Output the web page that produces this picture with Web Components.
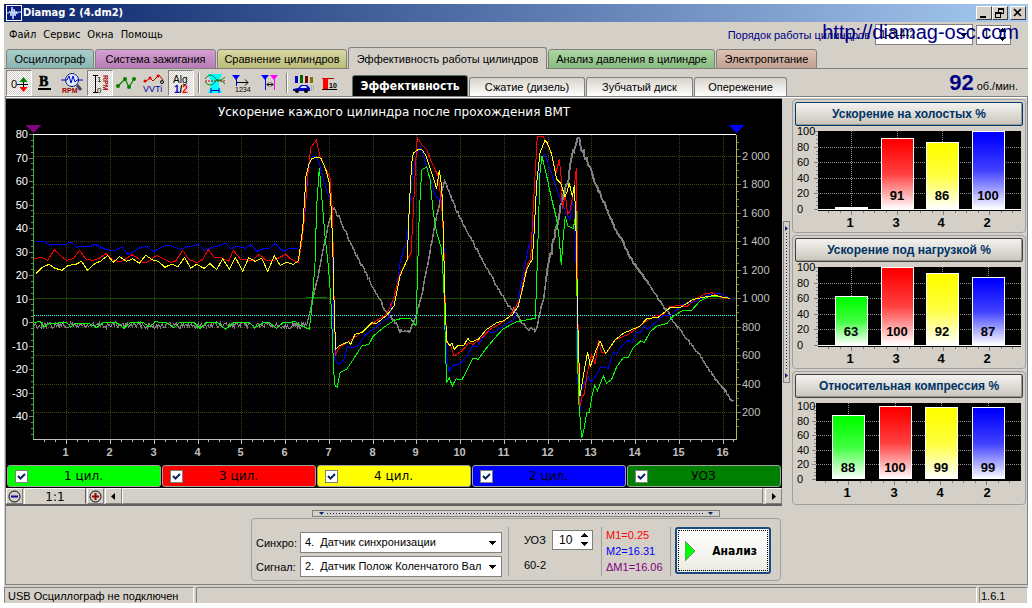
<!DOCTYPE html>
<html lang="ru">
<head>
<meta charset="utf-8">
<title>Diamag 2 (4.dm2)</title>
<style>
html, body { margin: 0; background: #fff; }
body { padding: 4px 4px 5px; font: 11px/16px "Liberation Sans", Arial, sans-serif; color: #000; }
</style>
</head>
<body>
<diamag-app></diamag-app>
<script>
const define = (name, html, init) => {
  const tpl = document.createElement('template');
  tpl.innerHTML = '<style>*{box-sizing:border-box}button,input,select{font:inherit;color:inherit;margin:0}</style>' + html;
  customElements.define(name, class extends HTMLElement {
    constructor() {
      super();
      this.attachShadow({ mode: 'open' }).append(tpl.content.cloneNode(true));
    }
    connectedCallback() {
      if (init && !this.ready) { this.ready = true; init(this, this.shadowRoot); }
    }
  });
};

/* ---------- title bar ---------- */
define('title-bar', `
<style>
:host { display: flex; align-items: center; height: 18px; padding: 0 2px; background: linear-gradient(90deg, #0a246a, #a6caf0); color: #fff; font: bold 11px/16px "DejaVu Sans Condensed", "DejaVu Sans", sans-serif; }
h1 { font: inherit; margin: 0 auto 0 1px; }
.box { width: 16px; height: 14px; padding: 0; border: 1px solid; border-color: #fff #404040 #404040 #fff; background: #d4d0c8; display: flex; }
.close { margin-left: 2px; }
svg { display: block; }
</style>
<svg width="16" height="16" viewBox="0 0 16 16"><rect width="16" height="16" fill="#fff"/><rect x="1" y="1" width="14" height="14" fill="#0a1a80"/><path d="M1 8h2l1-2 1 5 1-9 1 12 1-10 1 7 1-5 1 3 1-2h3" fill="none" stroke="#cfe0ff"/></svg>
<h1><slot></slot></h1>
<button class="box" aria-label="Свернуть"><svg width="14" height="12" shape-rendering="crispEdges"><path d="M3 9h6v2H3z"/></svg></button>
<button class="box" aria-label="Развернуть"><svg width="14" height="12" shape-rendering="crispEdges"><path d="M5.500 2v3M5 1.500h6M5 2.500h6M10.500 2v5M9 6.500h2M2 5h6v1H2zM2.500 5v6M7.500 5v6M2 10.500h6" fill="none" stroke="#000"/></svg></button>
<button class="box close" aria-label="Закрыть"><svg width="14" height="12"><path d="M3 2l7 7M10 2l-7 7" stroke="#000" stroke-width="1.600"/></svg></button>`);

/* ---------- drop-down and number box ---------- */
define('drop-down', `
<style>
:host { display: block; position: relative; }
select { display: block; width: 100%; height: 21px; padding: 0 18px 2px 4px; border: 1px solid #808080; border-radius: 0; background: #fff; appearance: none; }
svg { position: absolute; right: 6px; top: 9px; pointer-events: none; }
</style>
<select><option></option></select>
<svg width="7" height="4" shape-rendering="crispEdges"><path d="M0 0h7L3.500 4z"/></svg>`, (el, root) => {
  root.querySelector('option').textContent = el.getAttribute('value');
  root.querySelector('select').setAttribute('aria-label', el.getAttribute('label'));
});

define('number-box', `
<style>
:host { display: block; position: relative; }
input { display: block; width: 100%; height: 20px; padding: 0 0 1px 6px; border: 1px solid #808080; border-radius: 0; background: #fff; font-size: 12px; }
svg { position: absolute; right: 5px; top: 3px; pointer-events: none; }
</style>
<input type="text" inputmode="numeric">
<svg width="7" height="14" shape-rendering="crispEdges"><path d="M0 4h7L3.500 0zM0 9h7l-3.500 4z"/></svg>`, (el, root) => {
  const i = root.querySelector('input');
  i.value = el.getAttribute('value');
  i.setAttribute('aria-label', el.getAttribute('label'));
});

/* ---------- menu ---------- */
define('menu-bar', `
<style>
:host { display: flex; align-items: center; height: 25px; position: relative; }
nav { display: flex; gap: 7px; margin: 0 auto 0 5px; font: 11px/16px "DejaVu Sans Condensed", sans-serif; }
nav button { border: 0; padding: 0; background: none; }
.order { color: #000080; margin-right: 5px; }
drop-down { width: 98px; margin-right: 3px; }
number-box { width: 35px; margin-right: 17px; }
a { position: absolute; right: 9px; top: -2px; font-size: 20px; line-height: 24px; color: #000080; text-decoration: none; }
</style>
<nav><button>Файл</button><button>Сервис</button><button>Окна</button><button>Помощь</button></nav>
<span class="order">Порядок работы цилиндров</span>
<drop-down value="1-3-4-2" label="Порядок работы цилиндров"></drop-down>
<number-box value="1" label="Номер"></number-box>
<a href="http://diamag-osc.com">http://diamag-osc.com</a>`);

/* ---------- tabs ---------- */
define('main-tab', `
<style>
:host { display: block; flex: none; }
button { display: block; width: 100%; height: 20px; padding: 0; white-space: nowrap; border: 1px solid #808080; border-radius: 3px 3px 0 0; background: linear-gradient(var(--from), var(--to)); }
:host([active]) button { height: 22px; border-bottom: 0; background: #d4d0c8; }
</style>
<button role="tab"><slot></slot></button>`);

define('sub-tab', `
<style>
:host { display: block; flex: none; }
button { display: block; width: 100%; height: 19px; padding: 0; white-space: nowrap; border: 1px solid #808080; border-bottom: 0; border-radius: 3px 3px 0 0; background: linear-gradient(#d8d4cc, #fff); }
:host([active]) button { height: 21px; background: #000; color: #fff; border-color: #5c6f66; font: bold 12px/16px "DejaVu Sans Condensed", sans-serif; }
</style>
<button role="tab"><slot></slot></button>`);

/* ---------- toolbar ---------- */
const icons = {
  zero: `<text x="5" y="18" font-size="11">0</text><path d="M11 14.500h11M17.500 10v9" stroke="#000"/><path d="M13.500 12h8l-4-5z" fill="#008000"/><path d="M13.500 17h8l-4 5z" fill="#f00"/>`,
  bold: `<text x="6" y="16" font-size="14" font-weight="bold" font-family="Liberation Serif" stroke="#000" stroke-width=".6">B</text><path d="M5 19h13" stroke="#000" stroke-width="2"/>`,
  lens: `<circle cx="12" cy="10" r="6.500" fill="#dcecff" stroke="#0a246a"/><path d="M1 10h6l2-4 2 7 2-7 2 6 2-2h6" fill="none" stroke="#00c"/><path d="M17 15l4 5" stroke="#446" stroke-width="3"/><text x="2" y="23" font-size="7" font-weight="bold" fill="#a00000">RPM</text>`,
  scale: `<path d="M6 5.500h5M6 22.500h5M8.500 5v17" stroke="#000"/><text x="10" y="12" font-size="8">1</text><text x="10" y="23" font-size="8">0</text><text transform="translate(16 5) rotate(90)" font-size="7" font-weight="bold" fill="#a00000">RPM</text>`,
  dots: `<path d="M4 16l7-7 4 8 5-8" fill="none" stroke="#008000" stroke-width="1.200"/><g fill="#008000"><circle cx="4" cy="16" r="2"/><circle cx="11" cy="9" r="2"/><circle cx="15" cy="17" r="2"/><circle cx="20" cy="9" r="2"/></g>`,
  vvti: `<path d="M4 12l5-4 3 3 6-6 4 5" fill="none" stroke="#c00000"/><g fill="#e00"><circle cx="4" cy="11" r="1.500"/><circle cx="9" cy="8" r="1.500"/><circle cx="17" cy="6" r="1.500"/></g><circle cx="21" cy="12" r="1.500" fill="none" stroke="#000"/><text x="2" y="22" font-size="9" fill="#0000a0">VVTi</text>`,
  alg: `<text x="5" y="13" font-size="10">Alg</text><text x="6" y="23" font-size="10" font-weight="bold" fill="#0000d0">1<tspan fill="#000">/</tspan><tspan fill="#f00">2</tspan></text>`,
  phase: `<path d="M6 4h14l-3 7v5l3 7H6l3-7v-5z" fill="#0ff"/><path d="M3 9c4-5 7-5 10-1s6 3 10-1" fill="none" stroke="#008000"/><path d="M3 11h20" stroke="#c00" stroke-dasharray="2 1"/><path d="M3 12c4 4 7 4 10 0s6-2 10 2" fill="none" stroke="#008000"/><path d="M9 20.500h8M9 18v5M17 18v5" stroke="#00c"/>`,
  order: `<path d="M3 5h8L7 10z" fill="#00f"/><path d="M7.500 9v7" stroke="#00c"/><path d="M8 12.500h11M16 9.500l3 3-3 3" fill="none" stroke="#000"/><text x="6" y="22" font-size="7">1234</text>`,
  marks: `<path d="M5 5h8l-4 5z" fill="#00f"/><path d="M14 5h8l-4 5z" fill="#f0f"/><path d="M9.500 9v11" stroke="#00f"/><path d="M18.500 9v11" stroke="#f0f"/><path d="M11 14.500h6M13 12.500l-2 2 2 2M15 12.500l2 2-2 2" fill="none" stroke="#000"/>`,
  car: `<path d="M5 6h3v7H5z" fill="#00c"/><path d="M10 5h3v8h-3z" fill="#060"/><path d="M15 6h3v7h-3z" fill="#800000"/><path d="M20 7h3v6h-3z" fill="#770"/><path d="M3 19l5-1 3-3h6l3 3v3H3z" fill="#0000d0"/><path d="M10 18l2-2h4l1 2z" fill="#cfe0ff"/><circle cx="7" cy="21" r="2"/><circle cx="16" cy="21" r="2"/><path d="M21 16h3M21 18h3M21 20h3" stroke="#888" stroke-dasharray="1 1"/>`,
  limit: `<path d="M6 8h5v11H6z" fill="#f00"/><path d="M5 8.500h12" stroke="#c00"/><path d="M5 19.500h15" stroke="#000"/><text x="12" y="18" font-size="7" font-weight="bold">10</text>`
};
define('tool-button', `
<style>
:host { display: block; flex: none; }
button { display: block; width: 26px; height: 26px; padding: 0; border: 0; background: none; }
:host([pressed]) button { border: 1px solid; border-color: #808080 #fff #fff #808080; background: repeating-conic-gradient(#fff 0 25%, #d4d0c8 0 50%) 0 0 / 2px 2px; }
svg { display: block; width: 26px; height: 26px; }
:host([pressed]) svg { margin: -1px; }
</style>
<button></button>`, (el, root) => {
  const b = root.querySelector('button');
  b.setAttribute('aria-label', el.getAttribute('label'));
  b.innerHTML = `<svg viewBox="0 0 26 26">${icons[el.getAttribute('icon')]}</svg>`;
});

define('tool-bar', `
<style>
:host { display: flex; height: 28px; border-top: 1px solid #808080; margin-top: -1px; padding-left: 2px; align-items: flex-end; }
.tools { display: flex; gap: 1px; }
i { width: 2px; margin: 3px 1px 3px 3px; border-left: 1px solid #808080; border-right: 1px solid #fff; }
.tabs { display: flex; gap: 1px; align-items: flex-end; margin-left: 9px; }
.rpm { margin: 0 10px 0 auto; display: flex; align-items: baseline; gap: 3px; }
.rpm b { font-size: 22px; line-height: 26px; color: #000080; }
</style>
<div class="tools">
<tool-button icon="zero" label="Ноль" pressed></tool-button><tool-button icon="bold" label="Жирные линии"></tool-button><tool-button icon="lens" label="Масштаб RPM"></tool-button><tool-button icon="scale" label="Шкала RPM" pressed></tool-button><tool-button icon="dots" label="Точки"></tool-button><tool-button icon="vvti" label="VVTi"></tool-button><tool-button icon="alg" label="Алгоритм" pressed></tool-button><i></i>
<tool-button icon="phase" label="Фаза"></tool-button><tool-button icon="order" label="Порядок"></tool-button><tool-button icon="marks" label="Маркеры"></tool-button><i></i>
<tool-button icon="car" label="Разгон"></tool-button><tool-button icon="limit" label="Предел"></tool-button>
</div>
<div class="tabs" role="tablist">
<sub-tab active style="width:116px">Эффективность</sub-tab><sub-tab style="width:116px">Сжатие (дизель)</sub-tab><sub-tab style="width:107px">Зубчатый диск</sub-tab><sub-tab style="width:93px">Опережение</sub-tab>
</div>
<div class="rpm"><b>92</b><span>об./мин.</span></div>`);

/* ---------- main chart: traces are stored at three units per pixel ---------- */
const traces = {
  blue: [[0, '108,436 132,436 150,448 164,445 195,445 211,438 230,454 245,451 270,452 285,445 318,461 345,464 365,454 383,475 396,470 420,455 440,451 460,467 490,451 510,448 540,460 560,453 580,450 595,444 612,463 640,453 660,449 675,441 692,458 712,451 735,457 753,446 770,466 790,458 808,458 826,442 848,466 868,457'],
    [870, '0,457 24,457 33,448 40,380 47,310 52,240 60,200 70,180 82,185 90,210 100,250 110,285 120,310 125,340 128,450 131,700 135,790 142,802 152,802 162,790 172,752 190,756 205,748 225,718 245,702 262,690 280,675 297,665 307,620 320,570 330,500 340,465 350,440 356,380 362,290 370,215 380,175 392,152 398,170 410,215 425,260 435,300 450,310 458,350 463,480 467,700 470,780 476,825 490,808 510,803 530,780 548,750 560,753 575,730 595,706 610,711 640,690 670,672 676,655 690,580 705,510 715,455 725,425 735,350 742,260 750,210 760,180 765,175'],
    [1500, '142,195 155,235 170,280 185,320 200,355 210,372 217,320 222,330 228,500 230,760 233,850 240,945 246,880 255,855 266,843 273,858 290,835 302,812 325,817 340,768 350,775 362,752 385,733 397,740 408,708 420,712 433,690 440,700 460,685 490,658 510,660 525,645 550,625 590,615 610,603 640,593 660,592 680,603 695,610']],
  red: [[0, '103,488 125,484 143,493 163,461 185,482 200,493 220,488 239,463 258,490 280,493 297,487 318,473 338,492 362,497 380,487 396,476 412,485 428,500 445,497 470,478 490,488 512,499 527,495 548,463 566,490 590,500 608,490 625,461 643,485 665,485 686,496 700,463 722,491 757,493 778,475 797,492 820,494 857,475'],
    [870, '0,487 25,500 35,440 45,350 55,220 62,155 79,133 90,180 108,220 120,245 127,340 130,480 133,650 137,775 150,752 170,740 200,720 230,695 250,680 290,655 310,610 330,535 350,495 363,470 370,350 376,220 382,125 400,152 410,160 425,200 445,240 455,330 461,430 465,600 470,740 480,745 492,780 515,765 525,755 535,740 550,745 575,725 600,700 630,683 660,660 690,610 705,530 715,500 722,490 730,330 738,190 742,121 760,121'],
    [1500, '140,142 152,165 168,230 178,190 183,240 187,340 196,295 203,355 210,345 218,300 223,270 229,217 232,400 235,800 240,930 247,900 253,895 262,830 275,775 285,805 296,732 305,770 320,770 345,732 385,715 410,697 440,675 465,660 490,655 510,632 540,628 560,632 590,606 615,594 636,590 655,602 680,608']],
  lime: [[0, '103,680 120,676 133,692 150,682 200,680 212,693 225,681 265,681 290,695 310,680 350,680 372,697 390,681 430,680 450,693 465,677 500,681 522,695 540,678 580,678 600,697 620,680 655,681 677,700 700,680 750,681 765,695 790,680 810,681 830,697 850,679'],
    [870, '0,680 15,676 30,687 58,700 65,640 75,500 80,330 88,215 95,300 105,420 115,510 122,600 128,750 133,855 136,870 142,873 150,830 170,820 190,790 215,750 237,745 250,720 280,695 310,675 335,667 362,668 378,690 382,550 388,350 395,222 410,212 420,250 430,350 440,410 455,460 462,590 467,780 470,858 478,845 487,870 498,848 515,852 530,825 548,787 565,790 590,755 620,720 640,698 680,677 736,667 742,500 750,230 756,180 765,220'],
    [1500, '140,240 155,310 170,370 178,430 184,508 190,420 196,360 203,390 220,398 229,345 231,600 235,900 245,1027 252,1000 260,950 268,950 275,905 284,868 292,885 310,840 320,862 335,850 350,812 370,785 385,785 400,755 422,735 433,740 450,708 470,690 500,683 520,660 550,643 575,643 600,615 625,603 660,600']],
  yellow: [[0, '108,533 125,515 147,505 165,517 186,523 205,508 228,505 245,496 262,523 284,503 302,495 323,479 340,499 358,482 380,496 398,488 418,502 437,478 458,492 475,496 495,514 515,504 533,513 554,484 572,517 590,505 612,517 630,503 650,521 668,488 688,520 706,484 728,526 746,485 765,496 785,487 803,526 823,479 840,508 862,498'],
    [870, '0,502 10,505 25,495 38,400 48,240 57,205 65,188 80,183 93,187 107,220 118,262 123,330 128,440 133,650 137,760 150,748 176,737 182,745 195,715 215,710 245,680 258,683 290,658 312,630 330,540 352,490 358,330 365,200 370,172 385,160 395,160 407,178 425,230 440,278 448,223 455,270 460,400 465,620 470,735 480,750 486,740 493,760 505,748 523,747 533,727 543,738 565,730 590,700 620,680 640,675 668,655 685,630 695,590 710,520 727,490 733,400 740,260 750,170 765,133'],
    [1500, '142,140 155,175 170,250 182,262 195,302 202,285 208,262 217,302 223,268 227,360 230,500 234,700 240,900 247,860 255,810 263,768 271,812 285,770 300,735 317,773 345,732 370,712 405,697 420,690 440,668 475,664 510,635 540,635 580,610 620,602 645,598 665,603 690,607']]
};
const speed = [[0, '103,688 868,688'],
  [870, '0,688 50,690 58,655 70,600 85,540 100,460 118,370 130,335 150,370 190,460 240,555 290,650 310,670 330,705 360,708 375,665 395,600 410,520 425,440 440,360 455,290 464,258 500,345 560,460 640,605 670,650'],
  [1500, '40,640 60,670 85,700 108,703 120,650 132,600 142,520 155,460 170,390 185,320 200,270 215,190 225,150 235,125 245,165 260,195 290,270 340,385 400,500 470,600 530,690 600,780 640,840 680,890 703,925']];
const toPoints = segs => segs.flatMap(([dx, s]) => s.split(' ').map(p => p.split(',').map(Number)).map(([x, y]) => [x + dx, y]));
const jitter = pts => {
  const out = []; let seed = 7;
  const rnd = () => (seed = (seed * 1103515245 + 12345) % 2147483648) / 2147483648 - 0.5;
  for (let i = 1; i < pts.length; i++) {
    const [x0, y0] = pts[i - 1], [x1, y1] = pts[i];
    const n = Math.max(1, Math.round((x1 - x0) / 3));
    for (let k = 0; k < n; k++) {
      const x = x0 + (x1 - x0) * k / n;
      const amp = x < 920 ? 20 : x > 1640 && x < 1780 ? 26 : 10;
      out.push([x, y0 + (y1 - y0) * k / n + rnd() * amp]);
    }
  }
  return out;
};
define('scope-chart', `
<style>
:host { display: block; background: #000; }
svg { display: block; width: 100%; height: auto; }
</style>
<svg viewBox="6 99 776 365" font-family="Liberation Sans, sans-serif"></svg>`, (el, root) => {
  let s = '<g shape-rendering="crispEdges" fill="none">';
  const line = (x1, y1, x2, y2, c, extra = '') => s += `<path d="M${x1} ${y1}L${x2} ${y2}" stroke="${c}" ${extra}/>`;
  const gx = n => Math.round(22.5 + 43.75 * n) + 0.5, gy = v => Math.round(440.6 - v * 0.1424) + 0.5;
  for (let n = 1; n <= 16; n++) line(gx(n), 135, gx(n), 438, '#46460a', 'stroke-dasharray="1 1"');
  for (let v = 200; v <= 2000; v += 200) {
    line(34, gy(v), 736, gy(v), '#46460a', 'stroke-dasharray="1 1"');
    line(737, gy(v), 741, gy(v), '#808080');
  }
  line(34, 298.5, 736, 298.5, '#1c4a08');
  line(306, 297.5, 327, 297.5, '#008000');
  for (let v = 100; v < 2150; v += 50) line(737, gy(v), 739, gy(v), '#808080');
  for (let i = 0; i <= 52; i++) { const y = Math.round(134 + i * 5.875) + 0.5; if (y < 440) line(i % 4 ? 31 : 29, y, 33, y, '#808080'); }
  for (let n = 2; n <= 65; n++) { const x = Math.round(22.5 + 43.75 * n / 4) + 0.5; line(x, 440, x, n % 4 ? 442 : 444, '#c0c0c0'); }
  line(34, 315.5, 736, 315.5, '#40ffff', 'stroke-dasharray="1 1"');
  const poly = (pts, c, w = 1) => s += `<polyline points="${pts.map(([x, y]) => (x / 3).toFixed(1) + ',' + (96 + y / 3).toFixed(1)).join(' ')}" stroke="${c}" stroke-width="${w}"/>`;
  const noisy = jitter(toPoints(speed));
  poly(noisy.filter(p => p[0] < 930), '#808080');
  poly(noisy.filter(p => p[0] >= 927 && p[0] < 1640), '#808080', 1.5);
  poly(noisy.filter(p => p[0] >= 1637 && p[0] < 1950), '#808080', 2);
  poly(noisy.filter(p => p[0] >= 1947), '#808080', 1.5);
  for (const [name, segs] of Object.entries(traces)) poly(toPoints(segs), { blue: '#00f', red: '#f00', lime: '#0f0', yellow: '#ff0' }[name]);
  line(33, 134.5, 736, 134.5, '#fff');
  line(33.5, 135, 33.5, 439, '#40b040');
  line(33, 439.5, 737, 439.5, '#c0c0c0');
  line(736.5, 135, 736.5, 440, '#b8b840');
  s += '<path d="M25 125h16l-8 8z" fill="#800080"/><path d="M728 125h16l-8 8z" fill="#00f"/></g>';
  s += '<text x="394" y="116" text-anchor="middle" fill="#fff" font-family="DejaVu Sans" font-size="12">Ускорение каждого цилиндра после прохождения ВМТ</text>';
  for (let v = 80; v >= -40; v -= 10) s += `<text x="28" y="${Math.round(134 + (80 - v) * 2.35) + 4}" text-anchor="end" fill="#fff" font-size="11">${v}</text>`;
  for (let v = 200; v <= 2000; v += 200) s += `<text x="742" y="${gy(v) + 3.5}" fill="#c0c0c0" font-size="11">${v >= 1000 ? Math.floor(v / 1000) + ' ' + String(v % 1000).padStart(3, '0') : v}</text>`;
  for (let n = 1; n <= 16; n++) s += `<text x="${gx(n) - 1}" y="456" text-anchor="middle" fill="#c0c0c0" font-weight="bold" font-size="11">${n}</text>`;
  root.querySelector('svg').innerHTML = s;
});

define('channel-toggle', `
<style>
:host { display: block; }
label { display: flex; align-items: center; height: 22px; padding: 0 7px; border: 1px solid #a0a0a0; border-radius: 3px; background: var(--tone); }
input { appearance: none; width: 13px; height: 13px; border: 1px solid #808080; background: #fff url("data:image/svg+xml,%3Csvg xmlns='http://www.w3.org/2000/svg' viewBox='0 0 11 11'%3E%3Cpath d='M2 5l2.500 2.500L9 3' fill='none' stroke='%230a246a' stroke-width='2'/%3E%3C/svg%3E"); flex: none; }
span { flex: 1; text-align: center; padding-right: 14px; font: 12px/16px "DejaVu Sans", sans-serif; }
</style>
<label><input type="checkbox" checked><span><slot></slot></span></label>`);

define('zoom-bar', `
<style>
:host { display: flex; height: 17px; gap: 1px; border-bottom: 1px solid #606060; }
button { padding: 0; width: 17px; border: 1px solid; border-color: #fff #808080 #808080 #fff; background: #d4d0c8; display: flex; align-items: center; justify-content: center; }
.scale { width: 62px; text-align: center; border: 1px solid; border-color: #fff #606060 #d4d0c8 #fff; font: 12px/17px "DejaVu Sans", sans-serif; }
.bar { flex: 1; display: flex; }
.thumb { flex: 1; border: 1px solid; border-color: #fff #808080 #808080 #fff; margin-right: 2px; }
</style>
<button aria-label="Уменьшить"><svg width="15" height="15"><circle cx="7.500" cy="7.500" r="5.500" fill="none" stroke="#000"/><path d="M4 7.500h7" stroke="#0a0aa0" stroke-width="2"/></svg></button>
<output class="scale">1:1</output>
<button aria-label="Увеличить"><svg width="15" height="15"><circle cx="7.500" cy="7.500" r="5.500" fill="none" stroke="#000"/><path d="M4 7.500h7M7.500 4v7" stroke="#900" stroke-width="2"/></svg></button>
<div class="bar"><button aria-label="Влево"><svg width="5" height="7"><path d="M4 0v7L0 3.500z"/></svg></button><div class="thumb"></div><button aria-label="Вправо"><svg width="5" height="7"><path d="M1 0v7l4-3.500z"/></svg></button></div>`);

/* ---------- splitter handles ---------- */
define('split-handle', `
<style>
:host { display: flex; flex: none; align-items: center; justify-content: space-between; width: 408px; height: 7px; padding: 0 6px; border: 1px solid #808080; box-sizing: border-box; }
:host([vertical]) { flex-direction: column; width: 7px; height: 162px; padding: 5px 0; }
i { flex: 1; height: 1px; margin: 0 3px; background: repeating-linear-gradient(90deg, #0a246a 0 1px, transparent 1px 3px); }
:host([vertical]) i { width: 1px; height: auto; margin: 3px 0; background: repeating-linear-gradient(#0a246a 0 1px, transparent 1px 3px); }
svg { display: block; }
:host([vertical]) svg { transform: rotate(-90deg); }
</style>
<svg width="5" height="3"><path d="M0 0h5L2.500 3z" fill="#0a246a"/></svg><i></i><svg width="5" height="3"><path d="M0 0h5L2.500 3z" fill="#0a246a"/></svg>`);

/* ---------- bar chart cards ---------- */
define('gauge-card', `
<style>
:host { display: block; box-sizing: border-box; height: 134px; padding: 2px; border: 1px solid #a0a0a0; border-radius: 4px; }
button { display: block; width: 100%; height: 24px; padding: 0; border: 1px solid #404040; border-radius: 2px; box-shadow: inset -1px -1px #9a968c; background: linear-gradient(#f4f3f0, #c8c4ba); color: #003366; font-size: 12px; font-weight: bold; }
:host([focused]) button { border-color: #003c74; }
svg { display: block; width: 100%; height: auto; }
</style>
<button><slot></slot></button>
<svg viewBox="0 0 228 104" font-family="Liberation Sans, sans-serif"></svg>`, (el, root) => {
  const values = el.getAttribute('values').split(',').map(Number);
  const low = el.hasAttribute('inset');
  const left = low ? 21 : 23, base = low ? 81 : 83, full = low ? 8 : 5;
  const mids = low ? [53, 100, 146, 193] : [56, 102, 147, 193];
  const tones = ['#0f0', '#f00', '#ff0', '#00f'], names = [1, 3, 4, 2];
  const y = v => Math.round(base - (base - full) * v / 100);
  let s = `<defs>${tones.map((c, i) => `<linearGradient id="g${i}" x1="0" y1="0" x2="0" y2="1"><stop offset=".05" stop-color="${c}"/><stop offset=".5" stop-color="${c}" stop-opacity=".75"/><stop offset="1" stop-color="${c}" stop-opacity="0"/></linearGradient>`).join('')}</defs><g shape-rendering="crispEdges"><rect x="${left}" y="5" width="${226 - left}" height="${base - 3}"/>`;
  for (let v = 0; v <= 100; v += 5) s += `<path d="M${v % 20 ? left - 2 : left - 4} ${y(v) + 0.5}H${left}" stroke="#808080"/>`;
  for (let v = 20; v <= 80; v += 20) s += `<path d="M${left} ${y(v) + 0.5}H226" stroke="#909090" stroke-dasharray="1 1"/>`;
  mids.forEach(x => s += `<path d="M${x + 0.5} 5V${base}" stroke="#909090" stroke-dasharray="1 1"/>`);
  for (let i = -2; i < 15; i++) { const x = Math.round(mids[0] + i * 11.5) + 0.5; s += `<path d="M${x} ${base + 2}v${i % 4 ? 2 : 4}" stroke="#808080"/>`; }
  if (!low) s += `<path d="M${left} ${base + 0.5}H226" stroke="#fff"/>`;
  values.forEach((v, i) => {
    const top = Math.min(y(v), base - 2);
    s += `<rect x="${mids[i] - 16}" y="${top}" width="33" height="${base - top}" fill="#fff"/>`;
    if (v > 3) s += `<rect x="${mids[i] - 15}" y="${top + 1}" width="31" height="${base - top - 1}" fill="url(#g${i})"/>`;
  });
  s += '</g>';
  for (let v = 0; v <= 100; v += 20) s += `<text x="2" y="${y(v) + 4}" font-size="11">${v}</text>`;
  values.forEach((v, i) => {
    if (v > 3) s += `<text x="${mids[i]}" y="74" text-anchor="middle" font-size="13" font-weight="bold">${v}</text>`;
    s += `<text x="${mids[i] - 1}" y="${base + 18}" text-anchor="middle" font-size="13" font-weight="bold">${names[i]}</text>`;
  });
  root.querySelector('svg').innerHTML = s;
});

/* ---------- analysis panel ---------- */
define('analysis-panel', `
<style>
:host { display: flex; box-sizing: border-box; width: 530px; height: 63px; padding-left: 4px; border: 1px solid #a0a0a0; border-radius: 4px; }
.sources { display: grid; grid-template-columns: 44px 202px; row-gap: 3px; align-content: end; align-items: center; padding-bottom: 3px; }
hr { width: 1px; height: 49px; margin: 8px 0 0; border: 0; background: #a0a0a0; }
.angle { display: grid; grid-template-columns: 28px 41px; row-gap: 7px; align-items: center; align-content: start; padding: 11px 8px 0 15px; }
.marks { display: grid; align-content: start; padding: 8px 0 0 4px; width: 68px; }
.run { display: flex; align-items: center; width: 96px; height: 47px; margin: 8px 0 0 4px; padding: 0 12px 0 8px; border: 2px solid #1a4a80; border-radius: 3px; outline: 1px dotted #000; outline-offset: -4px; background: linear-gradient(#fff, #ecece4); font: bold 12px/16px "DejaVu Sans Condensed", sans-serif; justify-content: space-between; }
</style>
<div class="sources">
<span>Синхро:</span><drop-down value="4.&nbsp; Датчик синхронизации" label="Синхро"></drop-down>
<span>Сигнал:</span><drop-down value="2.&nbsp; Датчик Полож Коленчатого Вал" label="Сигнал"></drop-down>
</div>
<hr style="margin-left:6px">
<div class="angle"><span>УОЗ</span><number-box value="10" label="УОЗ"></number-box><span>60-2</span></div>
<hr>
<div class="marks"><span style="color:#f00">М1=0.25</span><span style="color:#00f">М2=16.31</span><span style="color:#800080">ΔМ1=16.06</span></div>
<hr>
<button class="run"><svg width="11" height="20"><path d="M0 0l10 10L0 20z" fill="#0f0" stroke="#808080"/></svg>Анализ</button>`);

/* ---------- status bar ---------- */
define('status-bar', `
<style>
:host { display: flex; gap: 2px; height: 16px; font: 11px/16px "Liberation Sans", sans-serif; }
span { border: 1px solid; border-color: #808080 #fff transparent #808080; padding-left: 3px; }
.link { width: 190px; } .info { flex: 1; } .ver { width: 49px; padding-left: 1px; }
</style>
<span class="link">USB Осциллограф не подключен</span><span class="info"></span><span class="ver">1.6.1</span>`);

/* ---------- window ---------- */
define('diamag-app', `
<style>
:host { display: block; background: #d4d0c8; }
.tabs { display: flex; gap: 1px; align-items: flex-end; height: 22px; padding-left: 2px; position: relative; }
.view { margin-left: 1px; border: 1px solid #808080; padding-right: 1px; box-shadow: inset 0 1px #fff; }
.work { display: grid; grid-template-columns: minmax(0, 1fr) 8px 234px; gap: 1px; padding-top: 1px; align-items: start; }
.scope { border-top: 1px solid #808080; border-bottom: 1px solid #606060; }
.channels { display: grid; grid-template-columns: repeat(5, 1fr); gap: 1px; padding: 1px; background: #000; }
.work > split-handle { align-self: start; margin-top: 123px; }
.cards { display: grid; gap: 2px; padding-top: 1px; }
.bottom { display: flex; flex-direction: column; align-items: center; gap: 1px; padding: 4px 0 3px; }
status-bar { margin-top: 2px; }
</style>
<title-bar>Diamag 2 (4.dm2)</title-bar>
<menu-bar></menu-bar>
<div class="tabs" role="tablist">
<main-tab style="width:88px;--from:#a9cfcb;--to:#8bb5b2">Осциллограф</main-tab>
<main-tab style="width:121px;--from:#d5a0d2;--to:#b67cb6">Система зажигания</main-tab>
<main-tab style="width:130px;--from:#d8d8a4;--to:#bcbc78">Сравнение цилиндров</main-tab>
<main-tab active style="width:199px">Эффективность работы цилиндров</main-tab>
<main-tab style="width:167px;--from:#aed6a4;--to:#88bc80">Анализ давления в цилиндре</main-tab>
<main-tab style="width:101px;--from:#dcc2b4;--to:#c2a08f">Электропитание</main-tab>
</div>
<tool-bar></tool-bar>
<main class="view">
<div class="work">
<section class="scope">
<scope-chart></scope-chart>
<div class="channels">
<channel-toggle style="--tone:#0f0">1 цил.</channel-toggle><channel-toggle style="--tone:#f00">3 цил.</channel-toggle><channel-toggle style="--tone:#ff0">4 цил.</channel-toggle><channel-toggle style="--tone:#00f">2 цил.</channel-toggle><channel-toggle style="--tone:#008000">УОЗ</channel-toggle>
</div>
<zoom-bar></zoom-bar>
</section>
<split-handle vertical></split-handle>
<div class="cards">
<gauge-card focused values="2,91,86,100">Ускорение на холостых %</gauge-card>
<gauge-card values="63,100,92,87">Ускорение под нагрузкой %</gauge-card>
<gauge-card inset values="88,100,99,99">Относительная компрессия %</gauge-card>
</div>
</div>
<div class="bottom"><split-handle></split-handle><analysis-panel></analysis-panel></div>
</main>
<status-bar></status-bar>`);
</script>
</body>
</html>
